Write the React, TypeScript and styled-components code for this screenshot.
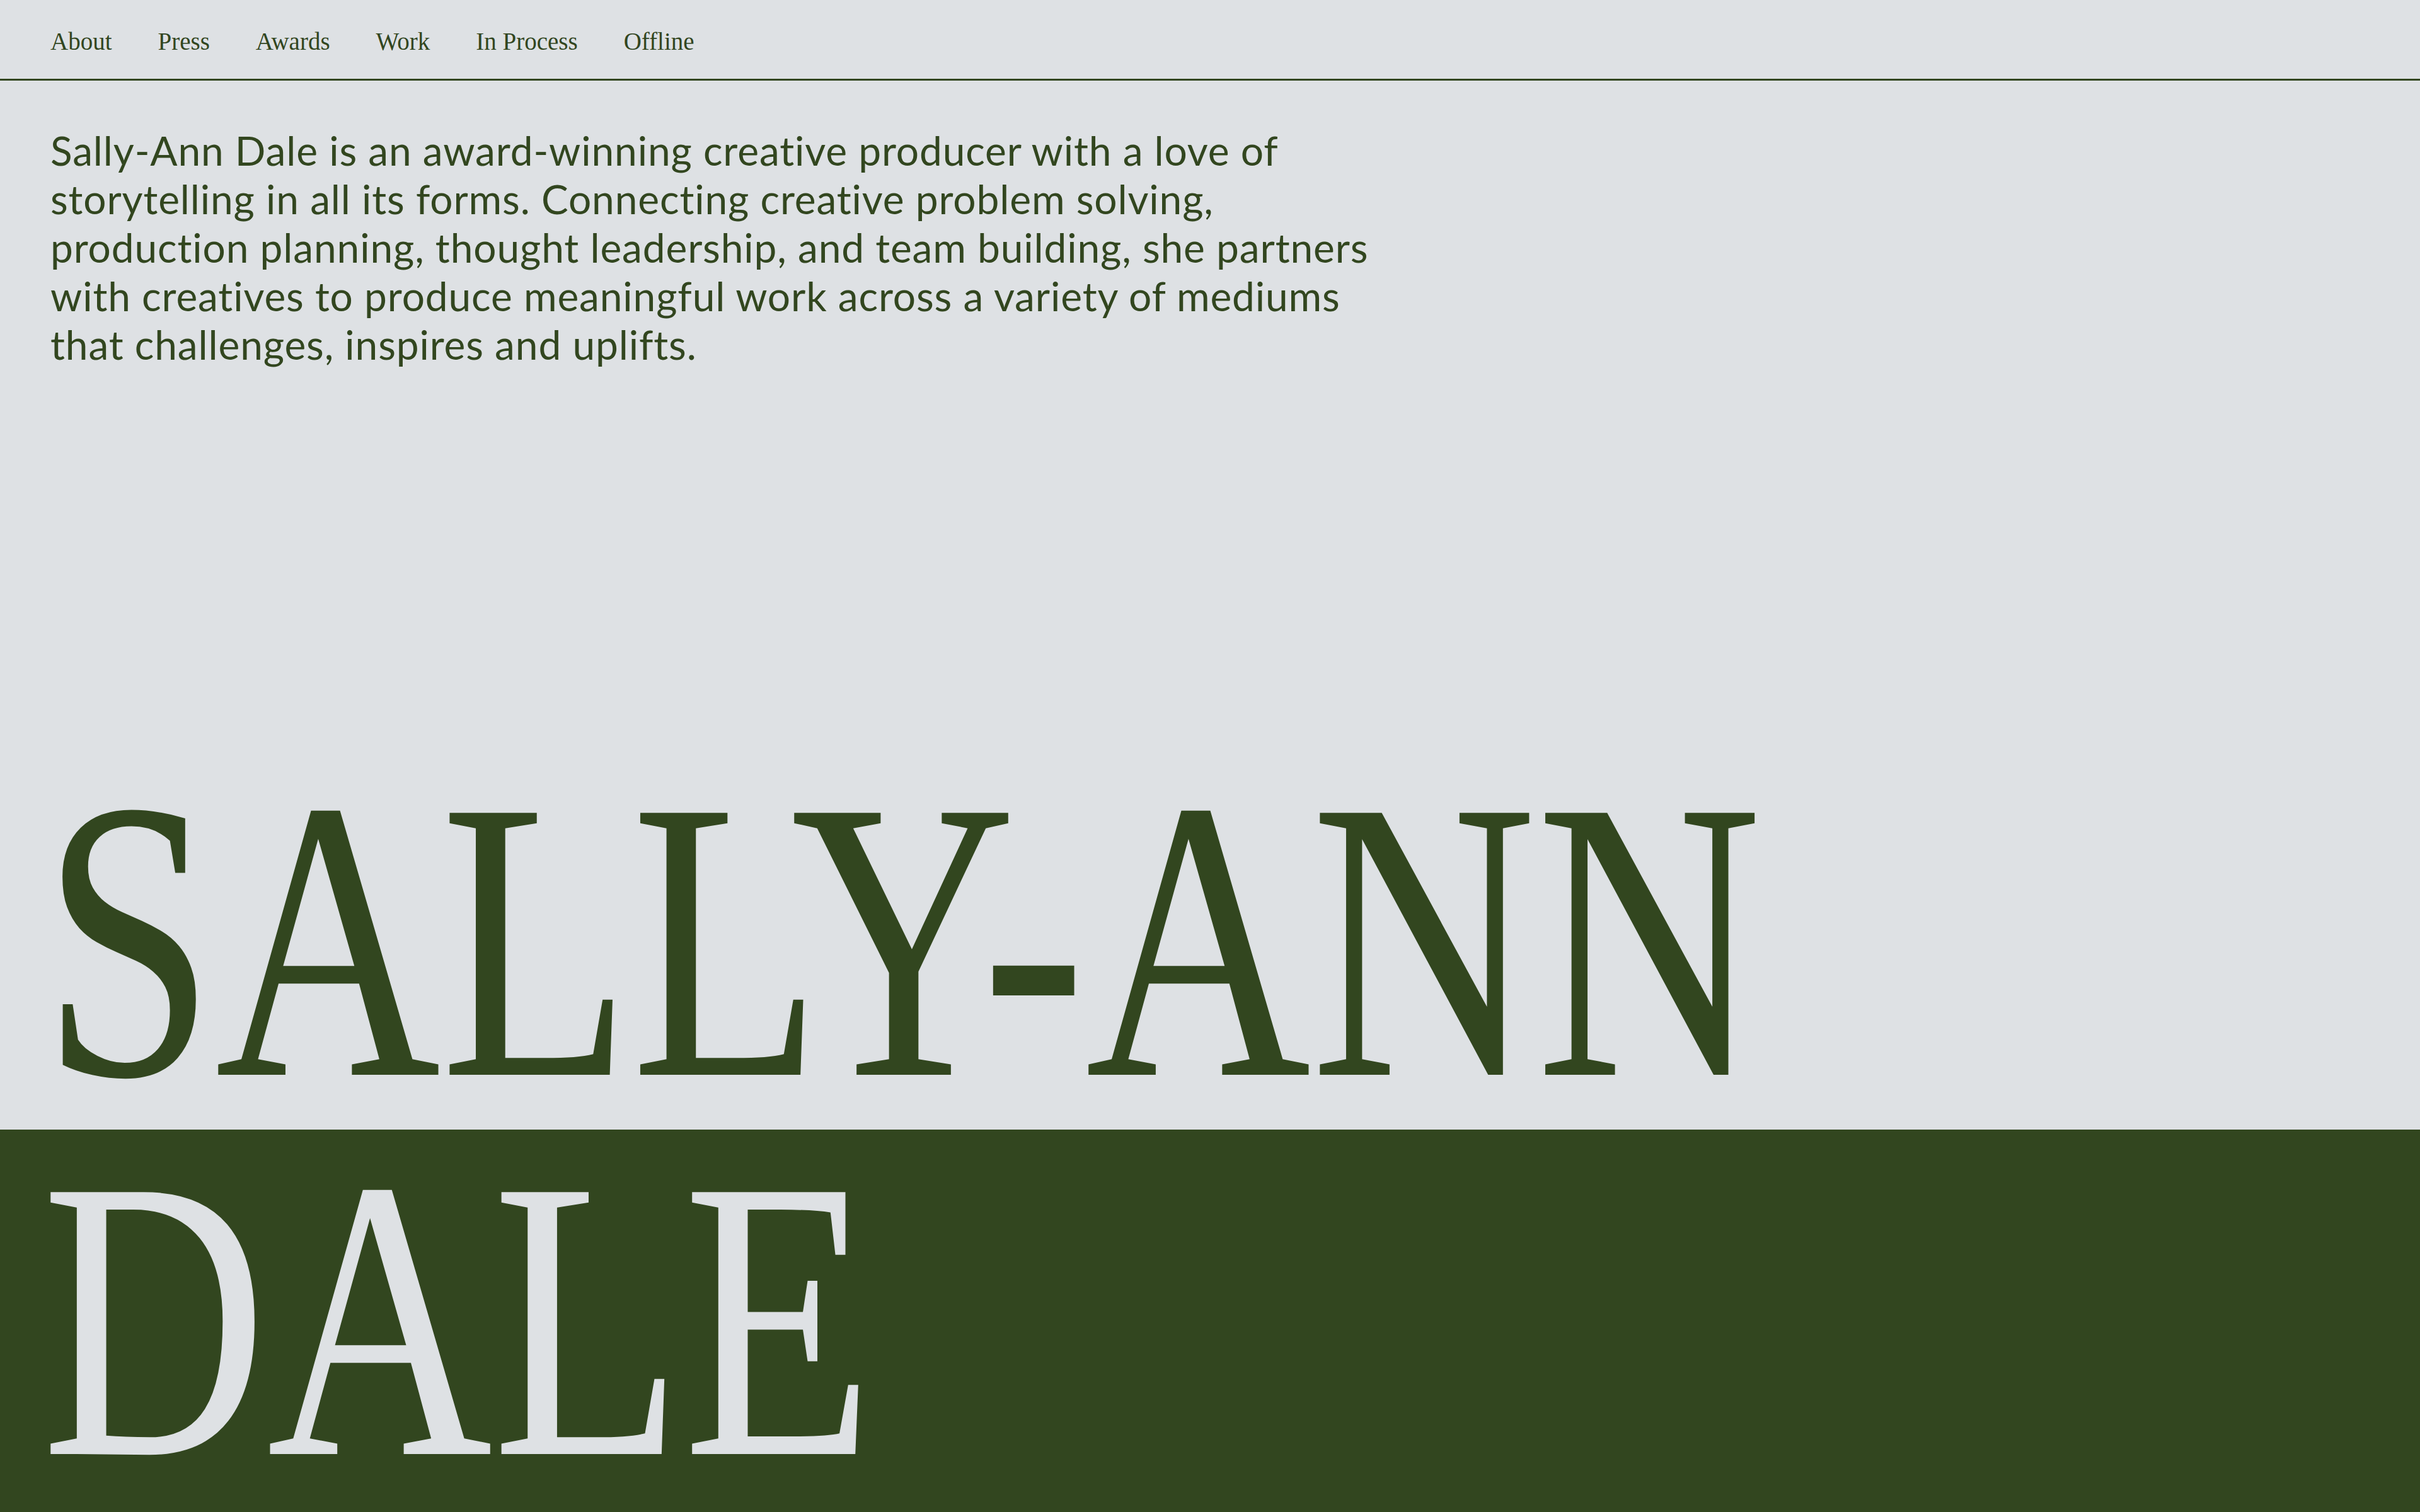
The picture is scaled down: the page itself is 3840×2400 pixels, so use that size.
import React from "react";
import styled, { createGlobalStyle } from "styled-components";

const GREEN = "#32461f";
const PAPER = "#dee1e4";

const GlobalStyle = createGlobalStyle`
  html, body {
    margin: 0;
    padding: 0;
    background: ${PAPER};
  }
  * { box-sizing: border-box; }
`;

const Page = styled.div`
  min-height: 100vh;
  display: flex;
  flex-direction: column;
  background: ${PAPER};
  color: ${GREEN};
  overflow: hidden;
`;

const Nav = styled.nav`
  display: flex;
  align-items: center;
  gap: 73px;
  height: 128px;
  padding: 6px 80px 0;
  border-bottom: 3px solid ${GREEN};
`;

const NavLink = styled.a`
  font-family: "Liberation Serif", "Times New Roman", serif;
  font-size: 39px;
  color: ${GREEN};
  text-decoration: none;
  white-space: nowrap;
`;

const Intro = styled.p`
  margin: 0;
  padding: 72px 80px 0;
  max-width: 2260px;
  font-family: Lato, "Noto Sans", sans-serif;
  font-size: 64px;
  line-height: 77px;
  letter-spacing: 0.88px;
  color: ${GREEN};
`;

const Spacer = styled.div`
  flex: 1;
`;

const NameLine = styled.h1<{ $dark?: boolean }>`
  margin: 0;
  padding: 0 0 ${(p) => (p.$dark ? "5px" : "0")} 66px;
  height: ${(p) => (p.$dark ? "607px" : "602px")};
  background: ${(p) => (p.$dark ? GREEN : PAPER)};
  color: ${(p) => (p.$dark ? PAPER : GREEN)};
  font-family: "Liberation Serif", "Times New Roman", serif;
  font-weight: 400;
  font-size: 635px;
  line-height: 602px;
  white-space: nowrap;
`;

const Condensed = styled.span`
  display: inline-block;
  transform: scaleX(0.78);
  transform-origin: 0 50%;
`;

const links = ["About", "Press", "Awards", "Work", "In Process", "Offline"];

export default function App() {
  return (
    <>
      <GlobalStyle />
      <Page>
        <Nav>
          {links.map((l) => (
            <NavLink key={l} href="#">
              {l}
            </NavLink>
          ))}
        </Nav>
        <Intro>
          Sally-Ann Dale is an award-winning creative producer with a love of
          storytelling in all its forms. Connecting creative problem solving,
          production planning, thought leadership, and team building, she
          partners with creatives to produce meaningful work across a variety of
          mediums that challenges, inspires and uplifts.
        </Intro>
        <Spacer />
        <NameLine>
          <Condensed>SALLY-ANN</Condensed>
        </NameLine>
        <NameLine $dark>
          <Condensed>DALE</Condensed>
        </NameLine>
      </Page>
    </>
  );
}
